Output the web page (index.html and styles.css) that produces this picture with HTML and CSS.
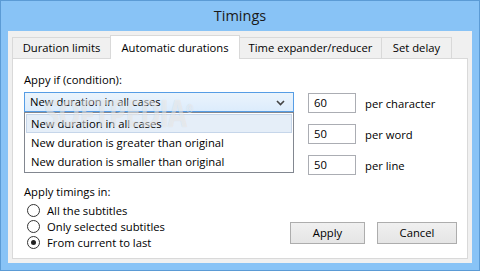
FILE: index.html
```html
<!DOCTYPE html>
<html lang="en">
<head>
    <meta charset="UTF-8">
    <title>Timings</title>
    <link rel="stylesheet" href="styles.css">
</head>
<body>
    <div class="window">
        <div class="titlebar">Timings</div>
        <div class="client">
            <div class="tabs">
                <div class="tab tab-limits">Duration limits</div>
                <div class="tab tab-auto tab-active">Automatic durations</div>
                <div class="tab tab-expander">Time expander/reducer</div>
                <div class="tab tab-delay">Set delay</div>
            </div>
            <div class="panel">
                <div class="top">
                    <div class="condition">
                        <div class="label">Appy if (condition):</div>
                        <div class="combo">
                            <span>New duration in all cases</span>
                            <svg class="chevron" width="9" height="6" viewBox="0 0 9 6">
                                <path d="M1 1 L4.5 4.5 L8 1" fill="none" stroke="#444" stroke-width="1.6"/>
                            </svg>
                            <ul class="dropdown">
                                <li class="selected">New duration in all cases</li>
                                <li>New duration is greater than original</li>
                                <li>New duration is smaller than original</li>
                            </ul>
                        </div>
                        <div class="watermark">SOFTPEDIA<sup>®</sup></div>
                    </div>
                    <div class="values">
                        <div class="value-row"><div class="input">60</div><span>per character</span></div>
                        <div class="value-row"><div class="input">50</div><span>per word</span></div>
                        <div class="value-row"><div class="input">50</div><span>per line</span></div>
                    </div>
                </div>
                <div class="bottom">
                    <div class="apply-in">
                        <div class="label">Apply timings in:</div>
                        <div class="radio"><span class="dot"></span>All the subtitles</div>
                        <div class="radio"><span class="dot"></span>Only selected subtitles</div>
                        <div class="radio"><span class="dot checked"></span>From current to last</div>
                    </div>
                    <div class="buttons">
                        <div class="button">Apply</div>
                        <div class="button button-cancel">Cancel</div>
                    </div>
                </div>
            </div>
        </div>
    </div>
</body>
</html>
```
FILE: styles.css
```css
body {
    margin: 0;
    font-family: 'Open Sans', 'Noto Sans', sans-serif;
    font-size: 11.25px;
    color: #000;
}
.window {
    height: 271px;
    box-sizing: border-box;
    background: #88c3f6;
    border: 1px solid #5b9bd5;
    display: flex;
    flex-direction: column;
}
.titlebar {
    height: 30px;
    line-height: 29px;
    text-align: center;
    font-size: 14.5px;
    color: #1a1a1a;
}
.client {
    flex: 1;
    min-height: 0;
    margin: 0 7px 7px 7px;
    background: #f0f0f0;
    padding: 4px;
    display: flex;
    flex-direction: column;
}
.tabs {
    display: flex;
    align-items: flex-end;
    height: 23px;
    flex-shrink: 0;
}
.tab {
    box-sizing: border-box;
    flex-shrink: 0;
    white-space: nowrap;
    height: 21px;
    line-height: 20px;
    text-align: center;
    border: 1px solid #d9d9d9;
    border-bottom: none;
    background: #f0f0f0;
    margin-right: -1px;
}
.tab-limits {
    width: 99px;
}
.tab-auto {
    width: 130px;
}
.tab-expander {
    width: 143px;
}
.tab-delay {
    width: 71px;
}
.tab-active {
    height: 24px;
    line-height: 23px;
    background: #fff;
    position: relative;
    z-index: 1;
    margin-bottom: -1px;
}
.panel {
    flex: 1;
    min-height: 0;
    background: #fff;
    border: 1px solid #d9d9d9;
    padding: 13px 10px 0 11px;
}
.top {
    display: flex;
}
.condition {
    width: 270px;
    position: relative;
}
.label {
    line-height: 16px;
    margin-bottom: 4px;
}
.combo {
    position: relative;
    height: 18px;
    border: 1px solid #569de5;
    background: linear-gradient(#ebf4fc, #dcecfc);
    padding-left: 5px;
    line-height: 18px;
}
.chevron {
    position: absolute;
    right: 8px;
    top: 7px;
}
.dropdown {
    position: absolute;
    left: -1px;
    right: -1px;
    top: 19px;
    margin: 0;
    padding: 1px;
    list-style: none;
    background: #fff;
    border: 1px solid #828790;
    z-index: 2;
}
.dropdown li {
    height: 17px;
    line-height: 17px;
    padding-left: 4px;
    border: 1px solid transparent;
}
.dropdown li.selected {
    background: #e5eef8;
    border-color: #c6d6ea;
}
.watermark {
    position: absolute;
    left: 20px;
    top: 14px;
    font-size: 38px;
    font-weight: bold;
    letter-spacing: -1px;
    transform: scaleX(0.72);
    transform-origin: left center;
    color: rgba(255, 255, 255, 0.5);
    text-shadow: 0 0 1px rgba(0, 0, 0, 0.12);
    z-index: 3;
    pointer-events: none;
}
.watermark sup {
    font-size: 12px;
}
.values {
    margin-left: 14px;
    padding-top: 21px;
}
.value-row {
    display: flex;
    align-items: center;
    margin-bottom: 11px;
}
.value-row:last-child {
    margin-bottom: 0;
}
.input {
    width: 41px;
    height: 18px;
    line-height: 18px;
    padding-left: 5px;
    border: 1px solid #abadb3;
    margin-right: 9px;
}
.bottom {
    display: flex;
    justify-content: space-between;
    align-items: flex-start;
    margin-top: 9px;
}
.apply-in .label {
    margin-bottom: 2px;
}
.radio {
    display: flex;
    align-items: center;
    height: 16px;
    padding-left: 3px;
}
.dot {
    width: 11px;
    height: 11px;
    border: 1px solid #333;
    border-radius: 50%;
    margin-right: 7px;
    position: relative;
    background: #fff;
}
.dot.checked::after {
    content: '';
    position: absolute;
    left: 3px;
    top: 3px;
    width: 5px;
    height: 5px;
    border-radius: 50%;
    background: #222;
}
.buttons {
    display: flex;
    gap: 12px;
    margin-top: 38px;
}
.button {
    width: 73px;
    height: 20px;
    line-height: 20px;
    text-align: center;
    border: 1px solid #adadad;
    background: linear-gradient(#f0f0f0, #e5e5e5);
}
.button-cancel {
    width: 78px;
}
```
